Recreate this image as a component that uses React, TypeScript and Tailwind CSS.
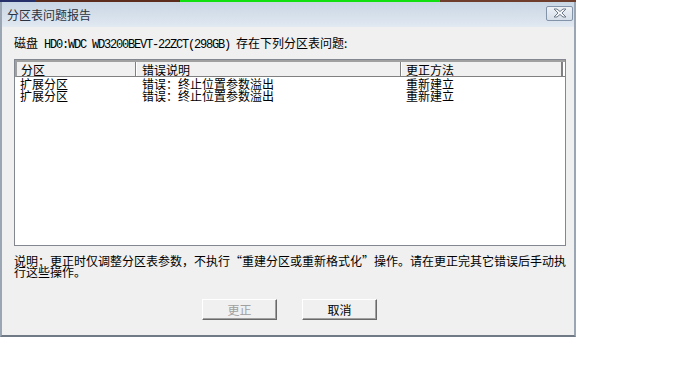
import React from "react";

const rows = [
  ["扩展分区", "错误：终止位置参数溢出", "重新建立"],
  ["扩展分区", "错误：终止位置参数溢出", "重新建立"],
];

function Latin({ children }: { children: React.ReactNode }) {
  return (
    <span className="font-['Liberation_Mono',monospace] text-[12px] tracking-[-1.2px]">
      {children}
    </span>
  );
}

export default function App() {
  return (
    <div className="w-[683px] h-[384px] bg-white font-['Noto_Sans_CJK_SC',sans-serif] text-[12px] text-black">
      <div className="w-[576px] h-[337px] flex flex-col">
        {/* top colored strip */}
        <div className="flex h-[2px] shrink-0">
          <div className="w-[35px] bg-[#26306a]" />
          <div className="w-[145px] bg-[#5b2b1c]" />
          <div className="w-[260px] bg-[#10e010]" />
          <div className="flex-1 bg-[#6e3d2c]" />
        </div>
        <div className="flex-1 flex flex-col border-l-2 border-r-2 border-b-2 border-l-[#9aa6b4] border-r-[#9aa6b4] border-b-[#6f7a86] bg-[#f0f0f0]">
          {/* title bar */}
          <div className="h-[25px] shrink-0 flex items-center justify-between pl-[5px] pr-[1px] bg-gradient-to-b from-[#c9d6e4] to-[#e0e8f1] border-b border-[#e3e9f0]">
            <span className="text-[12px] leading-[14px] text-[#2b3340] mt-[1px]">
              分区表问题报告
            </span>
            <div className="w-[27px] h-[15px] mt-[-2px] border border-[#8494a8] rounded-[2px] bg-gradient-to-b from-[#eef2f6] to-[#d6dee8] flex items-center justify-center">
              <svg width="16" height="10" viewBox="0 0 16 10">
                <path
                  d="M2 1 L5 1 L8 3.5 L11 1 L14 1 L10 5 L14 9 L11 9 L8 6.5 L5 9 L2 9 L6 5 Z"
                  fill="#f4f6f8"
                  stroke="#6d7a89"
                  strokeWidth="1"
                  strokeLinejoin="round"
                />
              </svg>
            </div>
          </div>

          {/* content */}
          <div className="flex-1 flex flex-col pl-[12px] pr-[8px]">
            <div className="mt-[9px] h-[14px] leading-[14px] whitespace-nowrap">
              磁盘<Latin> HD0:WDC WD3200BEVT-22ZCT(298GB) </Latin>存在下列分区表问题:
            </div>

            {/* list box */}
            <div className="mt-[9px] w-[552px] h-[187px] border border-[#828790] bg-white flex flex-col">
              <div className="flex h-[17px] shrink-0 border-t-2 border-l-2 border-[#a0a0a0] border-b border-b-[#808080] bg-[#f0f0f0]">
                <div className="w-[119px] pl-[4px] leading-[15px] border-r border-[#808080] shadow-[1px_0_0_#ffffff]">分区</div>
                <div className="w-[265px] pl-[6px] leading-[15px] border-r border-[#808080] shadow-[1px_0_0_#ffffff]">错误说明</div>
                <div className="w-[162px] pl-[5px] leading-[15px] border-r-2 border-[#808080]">更正方法</div>
                <div className="flex-1 bg-white" />
              </div>
              <div className="flex flex-col pt-[1px]">
                {rows.map((r, i) => (
                  <div key={i} className="flex h-[12px] leading-[12px]">
                    <div className="w-[126px] pl-[5px]">{r[0]}</div>
                    <div className="w-[260px] pl-[1px]">{r[1]}</div>
                    <div className="pl-[5px]">{r[2]}</div>
                  </div>
                ))}
              </div>
            </div>

            {/* note */}
            <div className="mt-[9px] leading-[11px] whitespace-nowrap">
              说明：更正时仅调整分区表参数，不执行“重建分区或重新格式化”操作。请在更正完其它错误后手动执
              <br />
              行这些操作。
            </div>

            {/* buttons */}
            <div className="mt-[22px] flex pl-[188px] gap-[25px]">
              <button className="w-[75px] h-[21px] bg-[#f0f0f0] border border-t-white border-l-white border-r-[#696969] border-b-[#696969] shadow-[inset_-1px_-1px_0_#a0a0a0] text-[#a0a0a0] text-[12px] leading-[18px]">
                更正
              </button>
              <button className="w-[75px] h-[21px] bg-[#f0f0f0] border border-t-white border-l-white border-r-[#696969] border-b-[#696969] shadow-[inset_-1px_-1px_0_#a0a0a0] text-black text-[12px] leading-[18px]">
                取消
              </button>
            </div>
          </div>
        </div>
      </div>
    </div>
  );
}
